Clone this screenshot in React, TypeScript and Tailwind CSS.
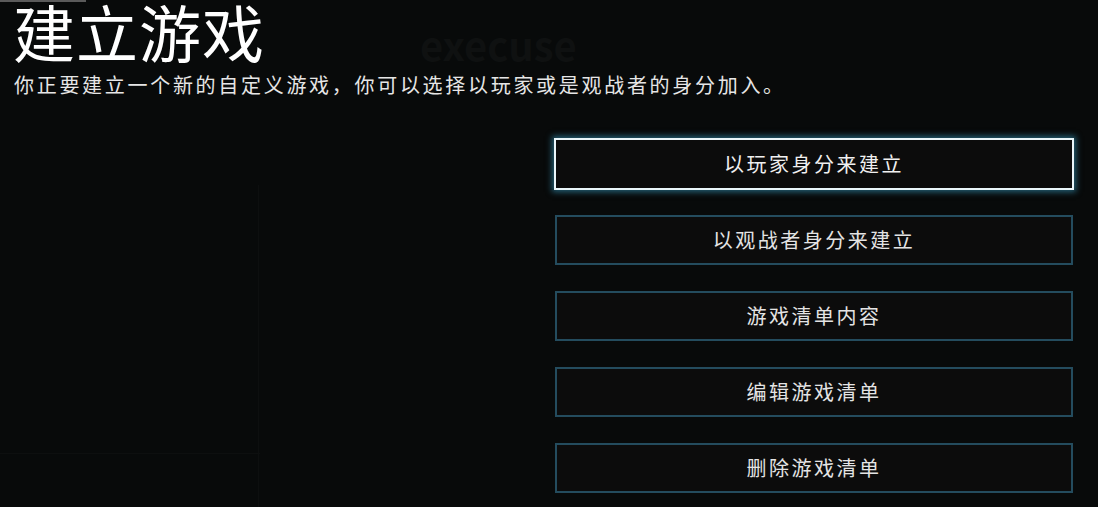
import React from "react";

const buttons = [
  "以玩家身分来建立",
  "以观战者身分来建立",
  "游戏清单内容",
  "编辑游戏清单",
  "删除游戏清单",
];

export default function App() {
  return (
    <div
      className="relative w-[1098px] h-[507px] overflow-hidden bg-[#080a0a] text-white"
      style={{ fontFamily: '"Noto Sans CJK SC", "Noto Sans", sans-serif' }}
    >
      {/* faint background decorations */}
      <div className="absolute left-0 top-0 w-[86px] h-[2px] bg-[#5a5a5a]" />
      <div className="absolute left-[420px] top-[24px] text-[40px] font-bold text-[#0f1111] leading-none">
        execuse
      </div>
      <div className="absolute left-[258px] top-[185px] w-px h-[322px] bg-[#0d0f0f]" />
      <div className="absolute left-0 top-[453px] w-[260px] h-px bg-[#0d0f0f]" />

      <div className="relative flex flex-col">
        <h1 className="pl-[13px] text-[62px] leading-[62px] font-normal tracking-[1px] text-white">
          建立游戏
        </h1>
        <p className="pl-[14px] mt-[10px] text-[20px] leading-[26px] tracking-[2.7px] text-[#e6e6e6]">
          你正要建立一个新的自定义游戏，你可以选择以玩家或是观战者的身分加入。
        </p>

        <div className="ml-[555px] w-[518px] mt-[41px] flex flex-col gap-[26px]">
          {buttons.map((label, i) =>
            i === 0 ? (
              <div
                key={label}
                className="-mx-px -my-px h-[52px] flex items-center justify-center border-2 border-[#eaf6fa] bg-[#0c0c0c] shadow-[0_0_6px_2px_rgba(60,170,210,0.55)]"
              >
                <span className="text-[20px] tracking-[2.5px] text-[#f0f0f0]">{label}</span>
              </div>
            ) : (
              <div
                key={label}
                className="h-[50px] flex items-center justify-center border-2 border-[#244c5e] bg-[#0c0c0c]"
              >
                <span className="text-[20px] tracking-[2.5px] text-[#e4e4e4]">{label}</span>
              </div>
            )
          )}
        </div>
      </div>
    </div>
  );
}
